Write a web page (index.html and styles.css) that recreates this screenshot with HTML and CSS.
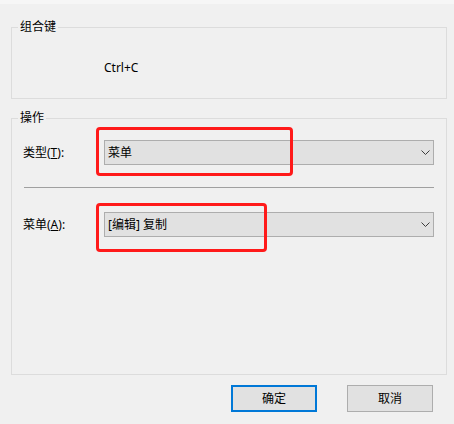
FILE: index.html
```html
<!DOCTYPE html>
<html lang="zh-CN">
<head>
<meta charset="utf-8">
<title>组合键</title>
<link rel="stylesheet" href="styles.css">
</head>
<body>
<div class="dialog">
  <div class="topband"></div>
  <div class="content">
    <fieldset class="group group-keys">
      <legend class="group-title">组合键</legend>
      <div class="keys-body">Ctrl+C</div>
    </fieldset>
    <fieldset class="group group-action">
      <legend class="group-title">操作</legend>
      <div class="action-body">
        <div class="row row-type">
          <label class="row-label">类型(<u>T</u>):</label>
          <div class="combo">
            <span class="combo-text">菜单</span>
            <svg class="chevron" width="9" height="5" viewBox="0 0 9 5"><path d="M0.5 0.5 L4.5 4.5 L8.5 0.5" fill="none" stroke="#3c3c3c" stroke-width="1"/></svg>
            <div class="mark mark-type"></div>
          </div>
        </div>
        <div class="separator"></div>
        <div class="row row-menu">
          <label class="row-label">菜单(<u>A</u>):</label>
          <div class="combo">
            <span class="combo-text">[编辑] 复制</span>
            <svg class="chevron" width="9" height="5" viewBox="0 0 9 5"><path d="M0.5 0.5 L4.5 4.5 L8.5 0.5" fill="none" stroke="#3c3c3c" stroke-width="1"/></svg>
            <div class="mark mark-menu"></div>
          </div>
        </div>
      </div>
    </fieldset>
    <div class="buttons">
      <button class="btn btn-default">确定</button>
      <button class="btn">取消</button>
    </div>
  </div>
</div>
</body>
</html>
```

FILE: styles.css
```css
* {
  box-sizing: border-box;
}

html, body {
  margin: 0;
  padding: 0;
  background: #f0f0f0;
}

body {
  font-family: "Noto Sans", "Noto Sans CJK SC", sans-serif;
  font-size: 12px;
  line-height: 16px;
  color: #000;
}

.dialog {
  width: 454px;
  height: 424px;
  display: flex;
  flex-direction: column;
}

.topband {
  height: 4px;
  background: #f6f6f6;
  flex: none;
}

.content {
  flex: 1;
  display: flex;
  flex-direction: column;
  padding: 15px 7px 12px 11px;
}

.group {
  margin: 0;
  padding: 0;
  min-width: 0;
  border: 1px solid #dcdcdc;
}

.group-title {
  margin-left: 6px;
  padding: 0 2px;
  line-height: 16px;
}

.group-keys {
  height: 80px;
  flex: none;
}

.keys-body {
  padding: 25px 0 0 92px;
}

.group-action {
  flex: 1;
  margin-top: 11px;
}

.action-body {
  padding: 14px 12px 0 11px;
}

.row {
  display: flex;
  align-items: center;
}

.row-label {
  width: 81px;
  flex: none;
}

.combo {
  position: relative;
  flex: 1;
  height: 25px;
  border: 1px solid #adadad;
  background: #e1e1e1;
  display: flex;
  align-items: center;
  padding: 0 3px 0 3px;
}

.combo-text {
  flex: 1;
}

.chevron {
  flex: none;
  display: block;
}

.mark {
  position: absolute;
  border: 3px solid #ff1a1a;
  border-radius: 4px;
  pointer-events: none;
}

.mark-type {
  left: -9px;
  top: -14px;
  width: 197px;
  height: 49px;
}

.mark-menu {
  left: -9px;
  top: -10px;
  width: 171px;
  height: 49px;
}

.separator {
  height: 1px;
  background: #a0a0a0;
  margin: 22px 0 24px 1px;
}

.buttons {
  flex: none;
  display: flex;
  justify-content: flex-end;
  gap: 30px;
  margin-top: 10px;
  padding-right: 14px;
}

.btn {
  width: 86px;
  height: 27px;
  border: 1px solid #adadad;
  background: #e1e1e1;
  font-family: "Noto Sans", "Noto Sans CJK SC", sans-serif;
  font-size: 12px;
  line-height: 16px;
  color: #000;
  padding: 0;
  margin: 0;
}

.btn-default {
  border: 2px solid #0078d7;
}
```
